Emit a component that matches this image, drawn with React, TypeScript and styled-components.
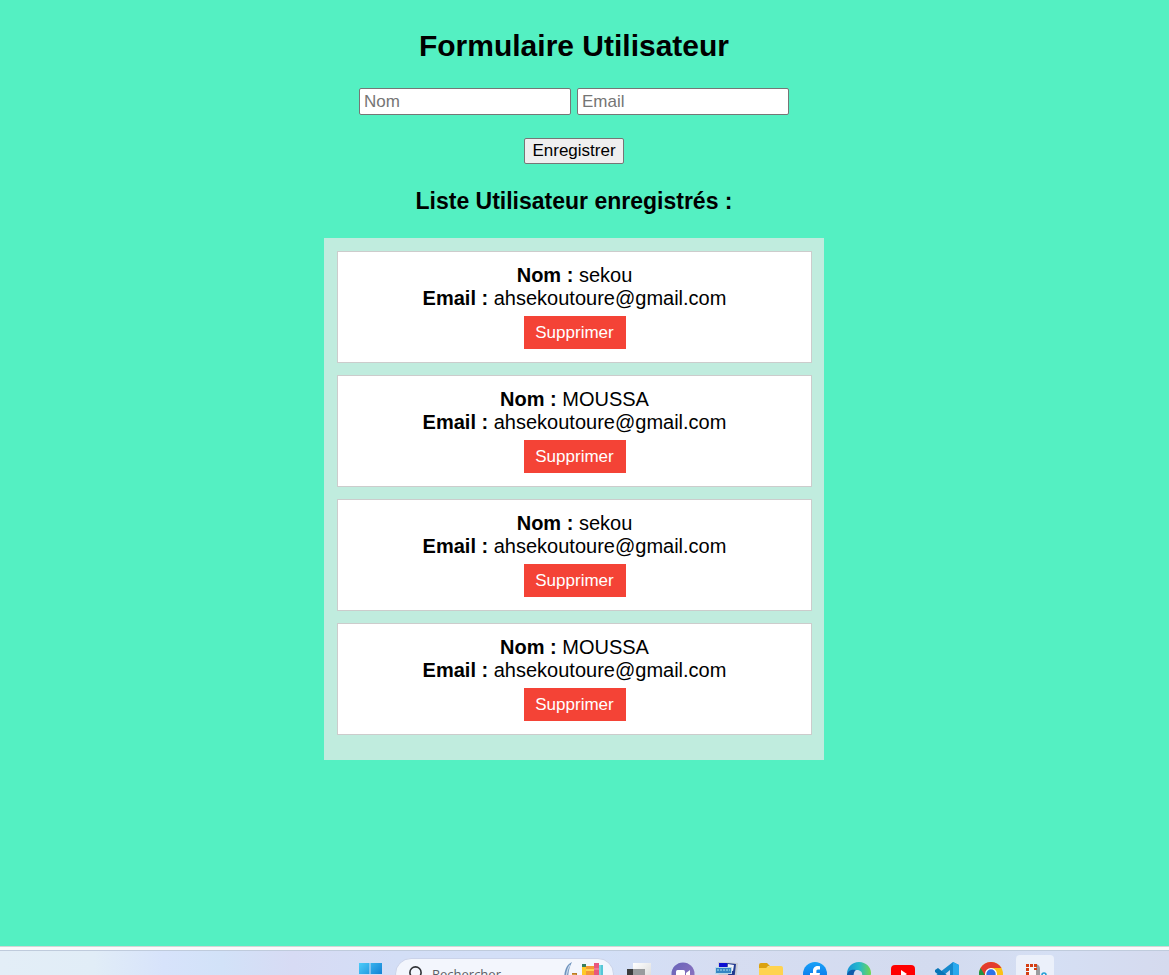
import React, { useState } from 'react';
import styled, { createGlobalStyle } from 'styled-components';

const GlobalStyle = createGlobalStyle`
  * { box-sizing: border-box; }
  body {
    margin: 0;
    background: #54f0c2;
    color: #000;
    font-family: "Liberation Sans", Arial, sans-serif;
    font-size: 20px;
    line-height: 23px;
  }
`;

const Screen = styled.div`
  height: 100vh;
  display: flex;
  flex-direction: column;
  overflow: hidden;
`;

const Page = styled.main`
  flex: 1;
  min-height: 0;
  overflow: hidden;
  display: flex;
  flex-direction: column;
  align-items: center;
  padding: 28px 21px 0 0;
  text-align: center;
`;

const Title = styled.h2`
  margin: 0 0 25px;
  font-size: 30px;
  line-height: 35px;
`;

const Subtitle = styled.h3`
  margin: 24px 0;
  font-size: 23px;
  line-height: 26px;
`;

const Form = styled.form`
  display: flex;
  flex-direction: column;
  align-items: center;
  gap: 23px;
`;

const Fields = styled.div`
  display: flex;
  gap: 6px;
`;

const Field = styled.input`
  width: 212px;
  height: 27px;
  padding: 1px 4px;
  border: 1px solid #767676;
  border-radius: 2px;
  background: #fff;
  font: 17px "Liberation Sans", Arial, sans-serif;
  &::placeholder { color: #757575; opacity: 1; }
`;

const SubmitButton = styled.button`
  height: 26px;
  padding: 0 7px;
  border: 1px solid #767676;
  border-radius: 2px;
  background: #efefef;
  color: #000;
  font: 17px "Liberation Sans", Arial, sans-serif;
`;

const UserList = styled.ul`
  width: 500px;
  max-width: 100%;
  margin: 0;
  padding: 13px 12px 25px 13px;
  display: flex;
  flex-direction: column;
  gap: 12px;
  list-style: none;
  background: #c0ecde;
`;

const UserCard = styled.li`
  padding: 12px;
  border: 1px solid #ccc;
  background: #fff;
  display: flex;
  flex-direction: column;
  align-items: center;
`;

const DeleteButton = styled.button`
  width: 102px;
  height: 33px;
  margin: 6px 0 1px;
  padding: 0;
  border: 0;
  background: #f44336;
  color: #fff;
  font: 17px "Liberation Sans", Arial, sans-serif;
`;

const Taskbar = styled.nav`
  flex: none;
  height: 29px;
  overflow: hidden;
  border-top: 1px solid #d3d6d6;
  background: #fafafb;
  padding-top: 3px;
`;

const TaskbarItems = styled.div`
  height: 48px;
  border-top: 1px solid #bfcbdc;
  padding: 0 0 2px 351px;
  display: flex;
  align-items: center;
  gap: 6px;
  background: linear-gradient(90deg, #e3eef7 0%, #e1edf7 8%, #d7e3fb 14%, #d2e2f8 19%, #d7dbf4 25%, #d3def6 34%, #d3e0f8 50%, #d6ddf1 62%, #d3dbef 80%, #d5dff4 90%, #d5daee 100%);
`;

const AppButton = styled.button<{ $active?: boolean }>`
  flex: none;
  width: 38px;
  height: 38px;
  padding: 0;
  border: 0;
  border-radius: 4px;
  background: ${(p) => (p.$active ? '#ebf0fa' : 'transparent')};
  display: flex;
  align-items: center;
  justify-content: center;
`;

const Search = styled.label`
  flex: none;
  width: 219px;
  height: 32px;
  padding: 0 8px 0 12px;
  display: flex;
  align-items: center;
  gap: 8px;
  border: 1px solid #cbd3e9;
  border-radius: 16px;
  background: #f3f6fd;
`;

const SearchInput = styled.input`
  flex: 1;
  min-width: 0;
  padding: 0;
  border: 0;
  background: transparent;
  font: 13px "Open Sans", "Noto Sans", sans-serif;
  &::placeholder { color: #5c5f66; opacity: 1; }
`;

const Glyph24 = styled.svg`
  flex: none;
  height: 24px;
`;

const Icon = ({ children, width = 24 }: { children: React.ReactNode; width?: number }) => (
  <Glyph24 width={width} viewBox={`0 0 ${width} 24`} aria-hidden="true">{children}</Glyph24>
);

const WindowsIcon = () => (
  <Icon>
    <defs>
      <linearGradient id="win" x1="0" y1="0" x2="24" y2="24" gradientUnits="userSpaceOnUse">
        <stop stopColor="#4fd0fb" /><stop offset="1" stopColor="#0067c8" />
      </linearGradient>
    </defs>
    <path fill="url(#win)" d="M1 1h10.500v11H1zM12.500 1H24v11H12.500zM1 13h10.500v11H1zM12.500 13H24v11H12.500z" />
  </Icon>
);

const SearchIcon = () => (
  <svg width="16" height="18" viewBox="0 0 16 18" fill="none" stroke="#303236" strokeWidth="1.600" aria-hidden="true">
    <circle cx="7.500" cy="7.500" r="5.600" /><path d="M11.500 11.500l4 4.500" />
  </svg>
);

const BooksIcon = () => (
  <Icon width={42}>
    <path d="M9 0C3 3 1 9 1 20h4C5 11 6 6 9 0z" fill="#6f93bd" />
    <path d="M7 3C4 7 3 12 3 20" stroke="#c5d7ec" strokeWidth="1.200" fill="none" />
    <path d="M9 11h5v13H9z" fill="#ba7b26" /><path d="M9 13h4" stroke="#eebe60" />
    <path d="M19 2h4v22h-4z" fill="#ffc928" /><path d="M19 2h4v3h-4z" fill="#397d60" />
    <path d="M23 4h8v20h-8z" fill="#f49a35" /><path d="M23 8h8" stroke="#ffd052" strokeWidth="2" />
    <path d="M31 1h5v23h-5z" fill="#e8567e" /><path d="M31 7h5" stroke="#f79aae" />
    <path d="M36 3h4v21h-4z" fill="#56c7d7" /><path d="M37 3v21" stroke="#9ae3e9" />
  </Icon>
);

const TaskViewIcon = () => (
  <Icon>
    <defs><linearGradient id="task" x2="1" y2="1"><stop stopColor="#fff" /><stop offset="1" stopColor="#d8d8d8" /></linearGradient></defs>
    <path d="M6 1h18v18H6z" fill="url(#task)" />
    <path d="M0 7h18v16H0z" fill="#3c3c3c" />
    <path d="M6 7h12v12H6z" fill="#999b9d" />
  </Icon>
);

const MeetIcon = () => (
  <Icon>
    <defs><linearGradient id="meet" x2="1" y2="1"><stop stopColor="#6764ba" /><stop offset="1" stopColor="#9475bf" /></linearGradient></defs>
    <circle cx="12" cy="12" r="11.500" fill="url(#meet)" />
    <rect x="5" y="8" width="9" height="9" rx="1.500" fill="#fff" />
    <path d="M15 11l4-3v9l-4-3z" fill="#fff" />
  </Icon>
);

const ProgramIcon = () => (
  <Icon>
    <path d="M3 0l20 1-2 21-17-1z" fill="#c9cbd3" />
    <path d="M4 1h8v5H4z" fill="#0d10d2" /><path d="M12 1l9 1-2 18-5 1z" fill="#233a91" />
    <path d="M13 2l6 1-1 6-5-1z" fill="#eef2fb" />
    <path d="M0 5h17v7H0z" fill="#b8d7e8" /><path d="M1 6h15v5H1z" fill="#3586c3" />
    <path d="M2 8h13" stroke="#a9def5" strokeDasharray="2 1" />
    <path d="M2 13h14v9H2z" fill="#1535a5" />
  </Icon>
);

const FolderIcon = () => (
  <Icon>
    <path d="M0 3q0-2 2-2h6l3 3h-2l-2 3H0z" fill="#dba20f" />
    <path d="M0 6h7l3-2h12q2 0 2 2v15H0z" fill="#ffd34f" />
  </Icon>
);

const FacebookIcon = () => (
  <Icon>
    <defs><linearGradient id="fb" x2="0" y2="1"><stop stopColor="#18a2f7" /><stop offset="1" stopColor="#0866e8" /></linearGradient></defs>
    <circle cx="12" cy="12" r="12" fill="url(#fb)" />
    <path d="M10 24v-9H7v-4h3V9c0-3.500 2-5 5-5l2 .2v3.300h-2c-1.300 0-1.600.7-1.600 1.800V11H17l-.7 4h-2.900v9z" fill="#fff" />
  </Icon>
);

const EdgeIcon = () => (
  <Icon>
    <defs><linearGradient id="edge" x1="0" x2="1"><stop stopColor="#1893d5" /><stop offset=".5" stopColor="#25b9cc" /><stop offset="1" stopColor="#72d64d" /></linearGradient></defs>
    <path d="M0 12C0 5 5 0 12 0s12 5 12 11c0 4-3 6-6 6-2 0-4-1-3-3 1-4-2-6-5-6C5 8 1 11 0 15z" fill="url(#edge)" />
    <path d="M0 13c1-5 5-6 9-5-3 2-4 9 2 12 3 1.500 7 1 11-1-3 4-7 5-11 5C4 24 0 18 0 13z" fill="#105cab" />
  </Icon>
);

const YoutubeIcon = () => (
  <Icon>
    <rect y="3" width="24" height="18" rx="4" fill="#f00" /><path d="M10 8l6 4-6 4z" fill="#fff" />
  </Icon>
);

const CodeIcon = () => (
  <Icon>
    <path d="M18 0l6 3v18l-6 3-3-2V8L3 18l-3-2v-2z" fill="#1689cc" />
    <path d="M18 0l6 3v18l-6 3z" fill="#29a9ee" />
    <path d="M0 8l3-2 15 12v6L0 10z" fill="#0875b7" />
  </Icon>
);

const ChromeIcon = () => (
  <Icon>
    <circle cx="12" cy="12" r="12" fill="#fbc116" />
    <path d="M12 12L1.600 6A12 12 0 0 0 12 24l5.200-9z" fill="#229342" />
    <path d="M1.600 6A12 12 0 0 1 22.400 6H12L7 15z" fill="#e33b2e" />
    <circle cx="12" cy="12" r="6" fill="#fff" /><circle cx="12" cy="12" r="4.700" fill="#2d73e7" />
  </Icon>
);

const SnipIcon = () => (
  <Icon>
    <path d="M12 2h1q4 1 4 5v12h-4z" fill="#9b9da0" /><path d="M5 5h8v14H5z" fill="#f7f8fa" />
    <path d="M3 2h3v3H3zM7 2h3v3H7zM11 2h3v3h-3zM3 6h3v3H3zM3 10h3v3H3zM3 14h3v3H3zM11 6h3v2h-3z" fill="#d43e12" />
    <circle cx="21" cy="13" r="2" fill="none" stroke="#279fd4" strokeWidth="1.600" />
  </Icon>
);

const apps = [
  { name: 'Vue des tâches', Glyph: TaskViewIcon },
  { name: 'Réunion', Glyph: MeetIcon },
  { name: 'Programme', Glyph: ProgramIcon },
  { name: 'Explorateur', Glyph: FolderIcon },
  { name: 'Facebook', Glyph: FacebookIcon },
  { name: 'Edge', Glyph: EdgeIcon },
  { name: 'YouTube', Glyph: YoutubeIcon },
  { name: 'Visual Studio Code', Glyph: CodeIcon },
  { name: 'Chrome', Glyph: ChromeIcon },
  { name: 'Capture', Glyph: SnipIcon, active: true },
];

const initialUsers = [
  { id: 1, nom: 'sekou', email: 'ahsekoutoure@gmail.com' },
  { id: 2, nom: 'MOUSSA', email: 'ahsekoutoure@gmail.com' },
  { id: 3, nom: 'sekou', email: 'ahsekoutoure@gmail.com' },
  { id: 4, nom: 'MOUSSA', email: 'ahsekoutoure@gmail.com' },
];

export default function App() {
  const [users, setUsers] = useState(initialUsers);
  const [nom, setNom] = useState('');
  const [email, setEmail] = useState('');

  const save = (e: React.FormEvent) => {
    e.preventDefault();
    if (!nom || !email) return;
    setUsers([...users, { id: Date.now(), nom, email }]);
    setNom('');
    setEmail('');
  };

  return (
    <Screen>
      <GlobalStyle />
      <Page>
        <Title>Formulaire Utilisateur</Title>
        <Form onSubmit={save}>
          <Fields>
            <Field aria-label="Nom" placeholder="Nom" value={nom} onChange={(e) => setNom(e.target.value)} />
            <Field aria-label="Email" type="email" placeholder="Email" value={email} onChange={(e) => setEmail(e.target.value)} />
          </Fields>
          <SubmitButton type="submit">Enregistrer</SubmitButton>
        </Form>
        <Subtitle>Liste Utilisateur enregistrés :</Subtitle>
        <UserList>
          {users.map((user) => (
            <UserCard key={user.id}>
              <div><strong>Nom :</strong> {user.nom}</div>
              <div><strong>Email :</strong> {user.email}</div>
              <DeleteButton type="button" onClick={() => setUsers(users.filter((u) => u.id !== user.id))}>
                Supprimer
              </DeleteButton>
            </UserCard>
          ))}
        </UserList>
      </Page>
      <Taskbar aria-label="Barre des tâches">
        <TaskbarItems>
          <AppButton type="button" aria-label="Démarrer"><WindowsIcon /></AppButton>
          <Search>
            <SearchIcon />
            <SearchInput aria-label="Rechercher" placeholder="Rechercher" />
            <BooksIcon />
          </Search>
          {apps.map(({ name, Glyph, active }) => (
            <AppButton key={name} type="button" aria-label={name} $active={active}><Glyph /></AppButton>
          ))}
        </TaskbarItems>
      </Taskbar>
    </Screen>
  );
}
